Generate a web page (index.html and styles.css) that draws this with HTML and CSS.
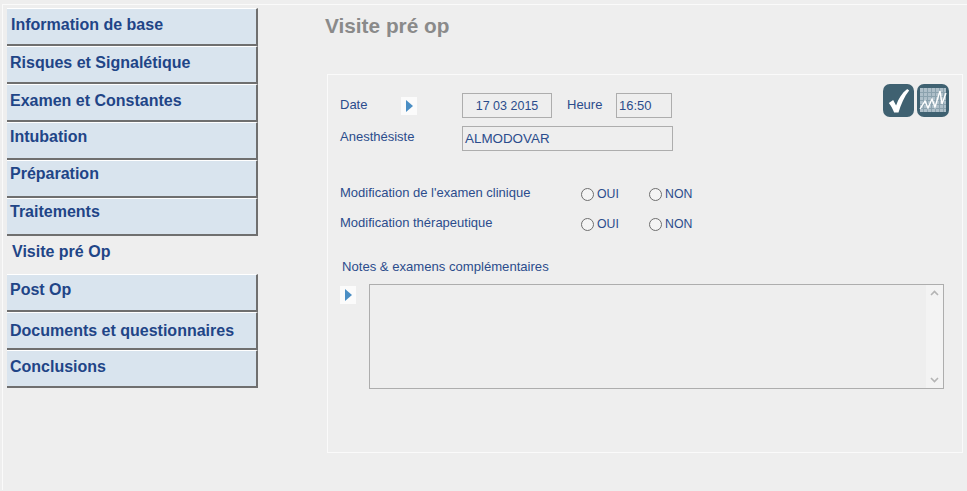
FILE: index.html
```html
<!DOCTYPE html>
<html lang="fr">
<head>
    <meta charset="UTF-8">
    <title>Visite pré op</title>
    <link rel="stylesheet" href="styles.css">
</head>
<body>
    <div class="page">
        <nav class="menu">
            <a class="menu-item" href="#">Information de base</a>
            <a class="menu-item" href="#">Risques et Signalétique</a>
            <a class="menu-item" href="#">Examen et Constantes</a>
            <a class="menu-item" href="#">Intubation</a>
            <a class="menu-item" href="#">Préparation</a>
            <a class="menu-item" href="#">Traitements</a>
            <a class="menu-item active" href="#">Visite pré Op</a>
            <a class="menu-item" href="#">Post Op</a>
            <a class="menu-item" href="#">Documents et questionnaires</a>
            <a class="menu-item" href="#">Conclusions</a>
        </nav>

        <main class="content">
            <h1 class="title">Visite pré op</h1>

            <section class="panel">
                <div class="actions">
                    <button class="icon-btn" aria-label="Valider">
                        <svg width="31" height="33" viewBox="0 0 32 33" preserveAspectRatio="none">
                            <rect width="32" height="33" rx="7" fill="#3f6171"/>
                            <path d="M6 19 L10.5 16 L13.5 21.5 C16 14.5 19.5 9 25 5 L27 6.5 C22 12.5 18.5 20.5 16 28.5 L11.5 28.5 C10 25 8.5 22 6 19 Z" fill="#fff"/>
                        </svg>
                    </button>
                    <button class="icon-btn" aria-label="Courbe">
                        <svg width="32" height="33" viewBox="0 0 32 33">
                            <rect width="32" height="33" rx="7" fill="#3f6171"/>
                            <rect x="3" y="4" width="26" height="24" fill="#aebfc9"/>
                            <path d="M6.5 4V28M10.5 4V28M14.5 4V28M18.5 4V28M22.5 4V28M26.5 4V28M3 8.5H29M3 12.5H29M3 16.5H29M3 20.5H29M3 24.5H29" stroke="#8ba2ae" stroke-width="1" fill="none"/>
                            <path d="M3 25 L8 17 L11 24 L15 15 L18 23 L23 7 L25 20 L29 9" stroke="#fff" stroke-width="1.4" fill="none"/>
                        </svg>
                    </button>
                </div>

                <div class="row row-date">
                    <span class="label label-date">Date</span>
                    <span class="arrow-btn"></span>
                    <span class="field field-date">17 03 2015</span>
                    <span class="label label-heure">Heure</span>
                    <span class="field field-time">16:50</span>
                </div>
                <div class="row row-anes">
                    <span class="label label-anes">Anesthésiste</span>
                    <span class="field field-name">ALMODOVAR</span>
                </div>

                <div class="row row-choice first">
                    <span class="label label-choice">Modification de l'examen clinique</span>
                    <span class="radio-wrap oui"><span class="radio"></span>OUI</span>
                    <span class="radio-wrap"><span class="radio"></span>NON</span>
                </div>
                <div class="row row-choice second">
                    <span class="label label-choice">Modification thérapeutique</span>
                    <span class="radio-wrap oui"><span class="radio"></span>OUI</span>
                    <span class="radio-wrap"><span class="radio"></span>NON</span>
                </div>

                <div class="notes-label">Notes &amp; examens complémentaires</div>
                <div class="notes">
                    <span class="arrow-btn"></span>
                    <div class="notes-box">
                        <div class="scrollbar">
                            <svg width="9" height="6" viewBox="0 0 9 6"><path d="M1 5 L4.5 1.5 L8 5" stroke="#b4b4b4" stroke-width="1.6" fill="none"/></svg>
                            <svg width="9" height="6" viewBox="0 0 9 6"><path d="M1 1 L4.5 4.5 L8 1" stroke="#b4b4b4" stroke-width="1.6" fill="none"/></svg>
                        </div>
                    </div>
                </div>
            </section>
        </main>
    </div>
</body>
</html>
```

FILE: styles.css
```css
html, body {
    margin: 0;
    height: 100%;
}
body {
    background: #eeeeee;
    font-family: "Liberation Sans", Arial, sans-serif;
    color: #2b4c8c;
    overflow: hidden;
}
.page {
    display: flex;
    height: 486px;
    margin: 4px 0 0 2px;
    padding: 3px 0 0 4px;
    border-top: 1px solid #fafafa;
    border-left: 1px solid #fafafa;
    box-sizing: border-box;
}
.menu {
    display: flex;
    flex-direction: column;
    width: 251px;
}
.menu-item {
    display: block;
    box-sizing: border-box;
    height: 38px;
    padding: 6px 0 0 3px;
    background: #d9e4ee;
    border-top: 1px solid #ffffff;
    border-right: 2px solid #6f6f6f;
    border-bottom: 2px solid #6f6f6f;
    color: #1f4587;
    font-size: 16px;
    font-weight: bold;
    line-height: 20px;
    text-decoration: none;
}
.menu-item:nth-child(1) {
    padding-left: 4px;
}
.menu-item:nth-child(4) {
    padding-top: 4px;
}
.menu-item:nth-child(5),
.menu-item:nth-child(6) {
    padding-top: 3px;
}
.menu-item:nth-child(8) {
    padding-top: 5px;
}
.menu-item:nth-child(9) {
    padding-top: 8px;
}
.menu-item.active {
    background: none;
    border-color: transparent;
    padding: 5px 0 0 5px;
}
.content {
    margin-left: 67px;
    flex: 1;
}
.title {
    margin: 0;
    padding-top: 6px;
    height: 66px;
    box-sizing: border-box;
    color: #8a8a8a;
    font-size: 20.8px;
    font-weight: bold;
    line-height: 24px;
}
.panel {
    position: relative;
    box-sizing: border-box;
    width: 636px;
    height: 379px;
    margin-left: 2px;
    padding: 18px 0 0 12px;
    border: 1px solid #fafafa;
    font-size: 13px;
}
.actions {
    position: absolute;
    top: 9px;
    right: 13px;
    display: flex;
    gap: 3px;
}
.icon-btn {
    padding: 0;
    border: none;
    background: none;
    line-height: 0;
}
.row {
    display: flex;
    align-items: center;
}
.label {
    font-size: 13px;
}
.label-date {
    width: 61px;
    margin-top: -2px;
}
.arrow-btn {
    display: block;
    position: relative;
    width: 16px;
    height: 18px;
    background: #fbfbfb;
}
.arrow-btn::after {
    content: "";
    position: absolute;
    left: 5px;
    top: 3px;
    border-left: 7px solid #4a8ec4;
    border-top: 6px solid transparent;
    border-bottom: 6px solid transparent;
}
.field {
    box-sizing: border-box;
    height: 25px;
    border: 1px solid #adadad;
    font-size: 14px;
    line-height: 24px;
    color: #2b4c8c;
}
.field-date {
    width: 90px;
    margin-left: 45px;
    font-size: 12.5px;
    text-align: center;
}
.label-heure {
    margin-left: 15px;
    width: 49px;
    margin-top: -2px;
}
.field-time {
    width: 56px;
    padding-left: 2px;
    font-size: 13px;
}
.row-anes {
    margin-top: 8px;
}
.label-anes {
    width: 122px;
    margin-top: -4px;
}
.field-name {
    width: 211px;
    padding-left: 2px;
    font-size: 13.4px;
}
.row-choice {
    height: 30px;
}
.row-choice.first {
    margin-top: 28px;
}
.label-choice {
    width: 240px;
    margin-top: -3px;
}
.radio-wrap {
    display: flex;
    align-items: center;
    gap: 3px;
    width: 68px;
    margin-left: 1px;
    margin-right: -1px;
    font-size: 12.3px;
}
.radio {
    display: block;
    box-sizing: border-box;
    width: 13px;
    height: 13px;
    border: 1px solid #6e6e6e;
    border-radius: 50%;
    background: #f4f4f4;
}
.notes-label {
    margin: 21px 0 0 2px;
    line-height: 14px;
    font-size: 13.1px;
}
.notes {
    display: flex;
    margin-top: 10px;
}
.notes .arrow-btn {
    margin-top: 2px;
}
.notes-box {
    box-sizing: border-box;
    display: flex;
    justify-content: flex-end;
    width: 575px;
    height: 105px;
    margin-left: 13px;
    border: 1px solid #adadad;
}
.scrollbar {
    display: flex;
    flex-direction: column;
    justify-content: space-between;
    align-items: center;
    width: 17px;
    padding: 5px 0;
    box-sizing: border-box;
    background: #f3f3f3;
}
```
